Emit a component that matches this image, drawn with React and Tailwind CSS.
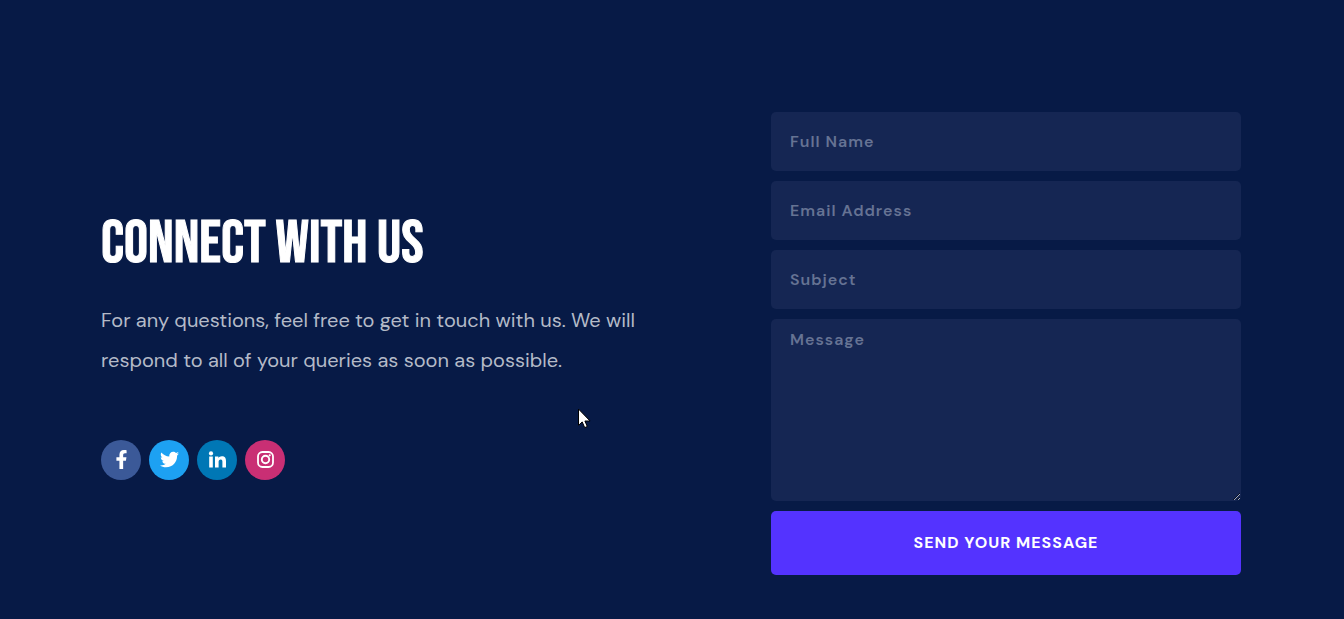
import React from 'react';
import { FaFacebookF, FaTwitter } from 'react-icons/fa';

const LinkedinIcon = ({ size }) => (
  <svg width={size} height={size} viewBox="0 0 19 19" fill="currentColor">
    <circle cx="3" cy="3.4" r="2.1" />
    <path d="M1.2 6.6h3.6v10.8H1.2zM7 6.600h3.400v1.400c.6-1 1.800-1.700 3.400-1.700 3.200 0 4.200 2 4.200 4.900v6.200h-3.600v-5.600c0-1.500-.3-2.400-1.600-2.400-1.600 0-2.200 1.100-2.200 2.600v5.400H7z" />
  </svg>
);

const InstagramIcon = ({ size }) => (
  <svg width={size} height={size} viewBox="0 0 19 19" fill="none" stroke="currentColor">
    <rect x="2" y="2" width="15" height="15" rx="4.4" strokeWidth="1.8" />
    <circle cx="9.5" cy="9.5" r="3.7" strokeWidth="1.9" />
    <circle cx="13.7" cy="5.3" r="1.1" fill="currentColor" stroke="none" />
  </svg>
);

const socials = [
  { label: 'Facebook', icon: FaFacebookF, color: 'bg-[#3b5998]' },
  { label: 'Twitter', icon: FaTwitter, color: 'bg-[#1da1f2]' },
  { label: 'LinkedIn', icon: LinkedinIcon, color: 'bg-[#0077b5]' },
  { label: 'Instagram', icon: InstagramIcon, color: 'bg-[#c92f74]' },
];

const fields = [
  { id: 'name', type: 'text', label: 'Full Name' },
  { id: 'email', type: 'email', label: 'Email Address' },
  { id: 'subject', type: 'text', label: 'Subject' },
];

const fieldStyle =
  'block w-full rounded-[5px] bg-[#152653] px-[19px] text-base font-semibold tracking-[1px] text-white outline-none placeholder:text-[#667393]';

const Cursor = () => (
  <svg
    className="pointer-events-none absolute top-[408px] left-[578px]"
    width="13"
    height="21"
    viewBox="0 0 13 21"
    aria-hidden="true"
  >
    <path
      d="M.5 1v16.4l3.7-3.5 2.5 5.7 2.6-1.1-2.4-5.5h5.2z"
      fill="#fff"
      stroke="#000"
      strokeWidth="1"
    />
  </svg>
);

export default function App() {
  return (
    <div className="relative min-h-screen bg-[#071a46] pr-0.5 font-['DM_Sans',Inter,sans-serif]">
      <section className="mx-auto grid max-w-[1140px] grid-cols-[1fr_470px] items-center gap-16 pt-28 pb-11">
        <div>
          <h2 className="font-['Bebas_Neue','Liberation_Sans_Narrow','Roboto_Condensed',sans-serif] text-[60px] leading-[72px] font-normal whitespace-nowrap text-white uppercase [-webkit-text-stroke:1px_white]">
            Connect with us
          </h2>
          <p className="mt-5 max-w-[560px] text-xl leading-10 text-[#b4bac8]">
            For any questions, feel free to get in touch with us. We will respond to all of your
            queries as soon as possible.
          </p>
          <div className="mt-15 flex gap-2">
            {socials.map(({ label, icon: Icon, color }) => (
              <a
                key={label}
                href="#"
                aria-label={label}
                className={`flex size-10 items-center justify-center rounded-full text-white ${color}`}
              >
                <Icon size={19} />
              </a>
            ))}
          </div>
        </div>

        <form className="flex flex-col gap-2.5" onSubmit={(e) => e.preventDefault()}>
          {fields.map(({ id, type, label }) => (
            <input
              key={id}
              id={id}
              type={type}
              aria-label={label}
              placeholder={label}
              className={`${fieldStyle} h-[59px]`}
            />
          ))}
          <textarea
            id="message"
            aria-label="Message"
            placeholder="Message"
            className={`${fieldStyle} h-[182px] py-[9px] leading-6`}
          />
          <button
            type="submit"
            className="h-16 rounded-[5px] bg-[#5433ff] text-base font-bold tracking-[1px] text-white uppercase"
          >
            Send your message
          </button>
        </form>
      </section>
      <Cursor />
    </div>
  );
}
